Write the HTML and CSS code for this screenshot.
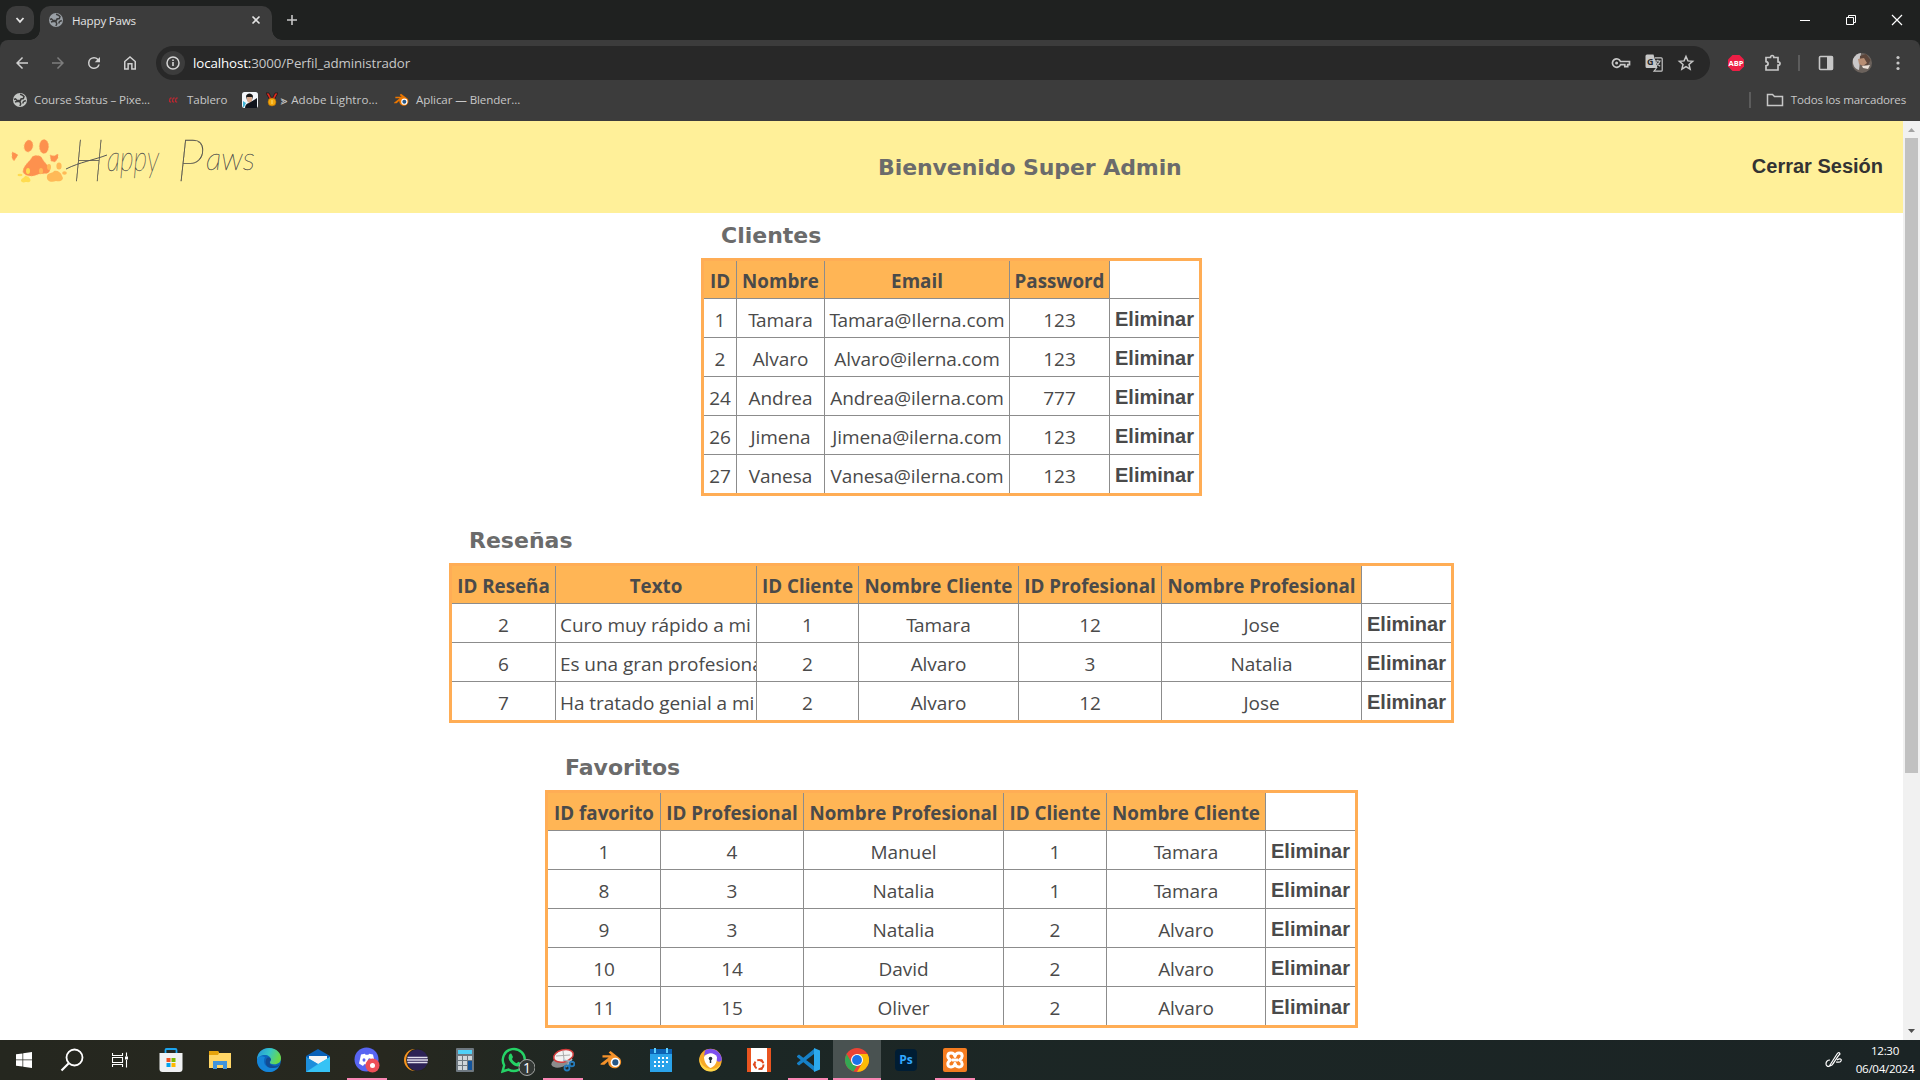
FILE: index.html
```html
<!DOCTYPE html>
<html lang="es">
<head>
<meta charset="utf-8">
<title>Happy Paws</title>
<link rel="stylesheet" href="styles.css">
</head>
<body>
<div class="desktop">
  <div class="tabstrip">
    <div class="tab-search"><svg width="10" height="10" viewBox="0 0 10 10"><path d="M1.5 3l3.5 3.8L8.500 3" fill="none" stroke="#e3e3e3" stroke-width="1.8"/></svg></div>
    <div class="tab">
      <svg width="16" height="16" viewBox="0 0 16 16"><circle cx="8" cy="8" r="7" fill="#9aa0a6"/><path d="M8 2.200c1.600.3 3 1 4 2.300l-.6 2-2.400.5-.5 1.500H5L3.500 6.800 2 7.500M3 10l2.500-.8 2.500.7.800 2.100-1 1.800M13.800 8.500l-2.300 1-.8 2" fill="none" stroke="#3c3c3c" stroke-width="1.500"/></svg>
      <span class="tab-title">Happy Paws</span>
      <svg class="tab-close" width="10" height="10" viewBox="0 0 10 10"><path d="M1.500 1.500l7 7M8.500 1.500l-7 7" stroke="#e3e3e3" stroke-width="1.600"/></svg>
    </div>
    <svg class="new-tab" width="12" height="12" viewBox="0 0 12 12"><path d="M6 1v10M1 6h10" stroke="#c7c7c7" stroke-width="1.600"/></svg>
    <div class="window-buttons">
      <svg width="12" height="12" viewBox="0 0 12 12"><path d="M1 6.500h10" stroke="#fff"/></svg>
      <svg width="12" height="12" viewBox="0 0 12 12"><path d="M1.500 3.500h7v7h-7zM3.500 3.500v-2h7v7h-2" fill="none" stroke="#fff"/></svg>
      <svg width="12" height="12" viewBox="0 0 12 12"><path d="M1 1l10 10M11 1L1 11" stroke="#fff" stroke-width="1.200"/></svg>
    </div>
  </div>

  <div class="toolbar">
    <div class="nav">
      <svg width="18" height="18" viewBox="0 0 24 24" fill="#d0d0d0"><path d="M20 11H7.800l5.600-5.600L12 4l-8 8 8 8 1.400-1.400L7.800 13H20z"/></svg>
      <svg width="18" height="18" viewBox="0 0 24 24" fill="#7d7d7d"><path d="M4 11h12.200l-5.600-5.600L12 4l8 8-8 8-1.400-1.400 5.600-5.600H4z"/></svg>
      <svg width="18" height="18" viewBox="0 0 24 24" fill="#d0d0d0"><path d="M17.650 6.350A7.950 7.950 0 0 0 12 4a8 8 0 1 0 7.730 10h-2.080A6 6 0 1 1 12 6c1.660 0 3.140.69 4.220 1.780L13 11h7V4z"/></svg>
      <svg width="18" height="18" viewBox="0 0 24 24"><path d="M5 20V10l7-6 7 6v10h-4.500v-7h-5v7z" fill="none" stroke="#d0d0d0" stroke-width="2"/></svg>
    </div>
    <div class="omnibox">
      <div class="info"><svg width="16" height="16" viewBox="0 0 16 16"><circle cx="8" cy="8" r="6" fill="none" stroke="#d6d6d6" stroke-width="1.500"/><path d="M8 7v4M8 4.500v1.600" stroke="#d6d6d6" stroke-width="1.600"/></svg></div>
      <span class="url"><b>localhost:</b>3000/Perfil_administrador</span>
      <div class="omni-icons">
        <svg width="20" height="12" viewBox="0 0 20 12"><path d="M9.500 4.500h9v3.200h-1.800v2h-2.900v-2H9.500a4.200 4.200 0 1 1 0-3.200z" fill="none" stroke="#c7c7c7" stroke-width="1.700"/><circle cx="5.600" cy="6" r="1.500" fill="#c7c7c7"/></svg>
        <svg width="18" height="18" viewBox="0 0 18 18"><path d="M2 .5h6.500L12.500 14H2a1.500 1.500 0 0 1-1.500-1.500V2A1.500 1.500 0 0 1 2 .5z" fill="#c7c7c7"/><path d="M10 3.800h6.200a1 1 0 0 1 1 1v11.400a1 1 0 0 1-1 1H9l2.500-3.200M9.800 7h6M12.800 5.800V7m2 0c-.4 2.300-2 4-4 5.300m.4-4c.8 1.600 2.300 3 4 3.900" fill="none" stroke="#c7c7c7" stroke-width="1.200"/><text x="2" y="10.500" font-size="9" font-weight="700" fill="#282828">G</text></svg>
        <svg width="18" height="18" viewBox="0 0 18 18"><path d="M9 2.500l1.900 4.400 4.700.4-3.600 3.100 1.100 4.700L9 12.600l-4.100 2.500L6 10.400 2.400 7.300l4.700-.4z" fill="none" stroke="#c7c7c7" stroke-width="1.500"/></svg>
      </div>
    </div>
    <div class="extensions">
      <svg width="18" height="18" viewBox="0 0 18 18"><path d="M5.500 1h7L17 5.500v7L12.500 17h-7L1 12.500v-7z" fill="#ed1e45"/><text x="9" y="11.800" font-size="7.500" font-weight="700" fill="#fff" text-anchor="middle">ABP</text></svg>
      <svg width="20" height="20" viewBox="0 0 20 20"><path d="M3 4.500h4.500c0-2.700 3.300-2.700 3.300 0H15v4.300c2.700 0 2.700 3.400 0 3.400v4.800H3v-4.200c2.800-.4 2.800-3.800 0-4.200z" fill="none" stroke="#c7c7c7" stroke-width="1.700"/></svg>
      <i class="bar"></i>
      <svg width="16" height="16" viewBox="0 0 16 16"><rect x="1.500" y="1.500" width="13" height="13" rx="1" fill="none" stroke="#c7c7c7" stroke-width="1.600"/><path d="M9 1.500h6v13H9z" fill="#c7c7c7"/></svg>
      <svg width="20" height="20" viewBox="0 0 20 20"><circle cx="10" cy="10" r="10" fill="#6b625c"/><path d="M1 6C3 2 6 .3 9 0L7 17C3 16 0 12 1 6z" fill="#c9c7c8"/><path d="M8 3l6-2 4.500 6-3 6-8-2z" fill="#5d463b"/><path d="M6 6l6-1 3 5-4 3-4-2z" fill="#b78d73"/><path d="M10 13l8-1-2 4-5-1z" fill="#eadfd6"/></svg>
      <svg width="6" height="16" viewBox="0 0 6 16" fill="#c7c7c7"><circle cx="3" cy="2.500" r="1.600"/><circle cx="3" cy="8" r="1.600"/><circle cx="3" cy="13.500" r="1.600"/></svg>
    </div>
  </div>

  <div class="bookmarks">
    <div class="bm bm-course"><svg width="16" height="16" viewBox="0 0 16 16"><circle cx="8" cy="8" r="7" fill="#c4c7c5"/><path d="M8 2.200c1.600.3 3 1 4 2.300l-.6 2-2.400.5-.5 1.500H5L3.500 6.800 2 7.500M3 10l2.500-.8 2.500.7.800 2.100-1 1.800M13.800 8.500l-2.300 1-.8 2" fill="none" stroke="#3c3c3c" stroke-width="1.500"/></svg><span>Course Status – Pixe...</span></div>
    <div class="bm bm-tablero"><svg width="9" height="6" viewBox="0 0 9 6"><path d="M2.700 1H1.200L.7 3v2h1.500M5.700 1H4.200L3.700 3v2h1.500M8.700 1H7.200L6.700 3v2h1.500" fill="none" stroke="#d8232f" stroke-width="1"/></svg><span>Tablero</span></div>
    <div class="bm bm-adobe"><svg width="16" height="16" viewBox="0 0 16 16"><rect width="16" height="16" rx="2.500" fill="#f2f6fa"/><path d="M4 4c1-3.500 6-3.500 7 0l-1 4H5z" fill="#161616"/><path d="M5 5h5v4l-2.500 2.500L5 9z" fill="#d6a98f"/><path d="M3 16c0-3 2-4.500 4-5l8-5v10z" fill="#10141c"/><path d="M1 9l3 2-2 4H1z" fill="#3fb4d8"/></svg>
      <svg class="medal" width="12" height="15" viewBox="0 0 12 15"><path d="M0 1h3l3 6 3-6h3L8 8H4z" fill="#d92a20" stroke="#111" stroke-width=".7"/><circle cx="6" cy="10" r="4" fill="#f2a60c" stroke="#a86505" stroke-width=".6"/><path d="M6 8v4" stroke="#ffe070"/></svg><span>⪢ Adobe Lightro...</span></div>
    <div class="bm bm-blender"><svg width="16" height="14" viewBox="0 0 24 21"><path d="M0 14.500L8.500 8H2V5.500h9.500L8.500 3l2-2 10 7.800a6.800 6.800 0 1 1-12.500 3L4 15.500H0z" fill="#ea7600"/><circle cx="15.500" cy="13" r="4.700" fill="#fff"/><circle cx="15.500" cy="13" r="3" fill="#265787"/></svg><span>Aplicar — Blender...</span></div>
    <div class="all-bm"><i class="bar"></i><svg width="18" height="14" viewBox="0 0 18 14"><path d="M1.500 1.500h5l2 2h8v9h-15z" fill="none" stroke="#c7c7c7" stroke-width="1.500"/></svg><span>Todos los marcadores</span></div>
  </div>

  <div class="viewport">
    <main class="page">
      <header class="site-header">
        <svg class="logo" width="270" height="92" viewBox="0 0 270 92">
          <g fill="#fd914e" stroke="#fdb06a" stroke-width=".7" stroke-dasharray="1.500 1.500"><ellipse cx="28.500" cy="25" rx="4.300" ry="6" transform="rotate(12 28.500 25)"/><ellipse cx="44" cy="25.500" rx="4.600" ry="7"/><path d="M12 31l3 1 3 2-2 3-2 3-2-3zM50 34l4 1 4-2v4l-3 4-4-1zM23 51c0-7 7-10 9-15 3-2 8-2 10 1 2 5 8 8 8 12-1 5-6 3-11 4-6 3-14 3-16-2z"/></g>
          <g fill="#ffb957"><path d="M47 55c1-4 5-2 7-5 3-1 7 1 8 5 3 4-2 6-6 5-5 2-10 0-9-5z"/><ellipse cx="59" cy="45" rx="2.600" ry="3.500"/><ellipse cx="49" cy="46" rx="2" ry="3"/><ellipse cx="64.500" cy="52" rx="2.300" ry="1.800"/><ellipse cx="41" cy="50" rx="2" ry="3"/></g>
          <g fill="#ffdc50"><path d="M21 59c1-2 3-2 4-4 3 0 5 2 5.500 4 0 3-3 2-5 2-2 1-5 0-4.500-2z"/><ellipse cx="28" cy="50" rx="2" ry="3"/><ellipse cx="20" cy="54" rx="2.500" ry="1.300"/></g>
          <g class="wordmark">
            <text x="73" y="60" font-size="58" textLength="31" lengthAdjust="spacingAndGlyphs">H</text>
            <text x="107" y="50" font-size="36" textLength="52" lengthAdjust="spacingAndGlyphs">appy</text>
            <text x="177" y="60" font-size="58" textLength="27" lengthAdjust="spacingAndGlyphs">P</text>
            <text x="206" y="49" font-size="32" textLength="49" lengthAdjust="spacingAndGlyphs">aws</text>
          </g>
          <path d="M66 48C80 41 94 39 107 34" fill="none" stroke="#555"/>
        </svg>
        <h1>Bienvenido Super Admin</h1>
        <button class="logout">Cerrar Sesión</button>
      </header>

      <section class="block clientes">
        <h2>Clientes</h2>
        <table>
          <colgroup><col class="w32"><col class="w88"><col class="w185"><col class="w100"><col class="w90"></colgroup>
          <tr><th>ID</th><th>Nombre</th><th>Email</th><th>Password</th><th class="empty"></th></tr>
          <tr><td>1</td><td><span class="kern">T</span>amara</td><td><span class="kern">T</span>amara@Ilerna.com</td><td>123</td><td><button>Eliminar</button></td></tr>
          <tr><td>2</td><td>Alvaro</td><td>Alvaro@ilerna.com</td><td>123</td><td><button>Eliminar</button></td></tr>
          <tr><td>24</td><td>Andrea</td><td>Andrea@ilerna.com</td><td>777</td><td><button>Eliminar</button></td></tr>
          <tr><td>26</td><td>Jimena</td><td>Jimena@ilerna.com</td><td>123</td><td><button>Eliminar</button></td></tr>
          <tr><td>27</td><td>Vanesa</td><td>Vanesa@ilerna.com</td><td>123</td><td><button>Eliminar</button></td></tr>
        </table>
      </section>

      <section class="block resenas">
        <h2>Reseñas</h2>
        <table>
          <colgroup><col class="w103"><col class="w201"><col class="w102"><col class="w160"><col class="w143"><col class="w200"><col class="w90"></colgroup>
          <tr><th>ID Reseña</th><th>Texto</th><th>ID Cliente</th><th>Nombre Cliente</th><th>ID Profesional</th><th>Nombre Profesional</th><th class="empty"></th></tr>
          <tr><td>2</td><td class="texto">Curo muy rápido a mi</td><td>1</td><td><span class="kern">T</span>amara</td><td>12</td><td>Jose</td><td><button>Eliminar</button></td></tr>
          <tr><td>6</td><td class="texto">Es una gran profesional</td><td>2</td><td>Alvaro</td><td>3</td><td>Natalia</td><td><button>Eliminar</button></td></tr>
          <tr><td>7</td><td class="texto">Ha tratado genial a mi</td><td>2</td><td>Alvaro</td><td>12</td><td>Jose</td><td><button>Eliminar</button></td></tr>
        </table>
      </section>

      <section class="block favoritos">
        <h2>Favoritos</h2>
        <table>
          <colgroup><col class="w112"><col class="w143"><col class="w200"><col class="w103"><col class="w159"><col class="w90"></colgroup>
          <tr><th>ID favorito</th><th>ID Profesional</th><th>Nombre Profesional</th><th>ID Cliente</th><th>Nombre Cliente</th><th class="empty"></th></tr>
          <tr><td>1</td><td>4</td><td>Manuel</td><td>1</td><td><span class="kern">T</span>amara</td><td><button>Eliminar</button></td></tr>
          <tr><td>8</td><td>3</td><td>Natalia</td><td>1</td><td><span class="kern">T</span>amara</td><td><button>Eliminar</button></td></tr>
          <tr><td>9</td><td>3</td><td>Natalia</td><td>2</td><td>Alvaro</td><td><button>Eliminar</button></td></tr>
          <tr><td>10</td><td>14</td><td>David</td><td>2</td><td>Alvaro</td><td><button>Eliminar</button></td></tr>
          <tr><td>11</td><td>15</td><td>Oliver</td><td>2</td><td>Alvaro</td><td><button>Eliminar</button></td></tr>
        </table>
      </section>
    </main>
    <div class="scrollbar">
      <svg width="17" height="17" viewBox="0 0 17 17"><path d="M5 11l3.500-4 3.500 4z" fill="#a3a3a3"/></svg>
      <div class="thumb"></div>
      <svg class="down" width="17" height="17" viewBox="0 0 17 17"><path d="M5 6l3.500 4L12 6z" fill="#505050"/></svg>
    </div>
  </div>

  <footer class="taskbar">
    <div class="app"><svg width="16" height="16" viewBox="0 0 16 16" fill="#fff"><path d="M0 2.300L6.500 1.400v6.200H0zM7.200 1.300L16 0v7.600H7.200zM0 8.300h6.500v6.300L0 13.700zM7.200 8.300H16V16l-8.800-1.300z"/></svg></div>
    <div class="app"><svg width="26" height="24" viewBox="0 0 26 24" fill="none" stroke="#fff"><circle cx="14.500" cy="9.500" r="8" stroke-width="1.800"/><path d="M8.500 15.500L1.500 22.500" stroke-width="2.200"/></svg></div>
    <div class="app"><svg class="nudge-left" width="16" height="16" viewBox="0 0 16 16" fill="none" stroke="#fff" stroke-width="1.100"><path d="M.5 1v2.500h10V1M.5 15v-2.500h10V15M.5 5.500h10v5H.5zM14.500 .5v4M14.500 8v7.500"/><path d="M13 4.500h3v3h-3z" fill="#fff" stroke="none"/></svg></div>
    <div class="app"><svg width="24" height="24" viewBox="0 0 24 24"><path d="M6.500 6V2q0-1 1-1h9q1 0 1 1v4" fill="none" stroke="#1ca4ee" stroke-width="1.800"/><path d="M.5 5h23v16q0 3-3 3h-17q-3 0-3-3z" fill="#f0f1f2"/><path d="M7.500 10h4v4h-4z" fill="#f25022"/><path d="M12.500 10h4v4h-4z" fill="#7fba00"/><path d="M7.500 15h4v4h-4z" fill="#00a4ef"/><path d="M12.500 15h4v4h-4z" fill="#ffb900"/></svg></div>
    <div class="app"><svg width="22" height="20" viewBox="0 0 22 20"><path d="M0 1h9l1 2h12v15H0z" fill="#ffd667"/><path d="M0 1h9l1 2-1 2H0z" fill="#e5a30c"/><path d="M4 19v-8h14v8h-4v-4H8v4z" fill="#4094dc"/></svg></div>
    <div class="app"><svg width="24" height="24" viewBox="0 0 24 24"><defs><linearGradient id="eg" x1="0" y1="0" x2="1" y2=".3"><stop offset="0" stop-color="#2390de"/><stop offset=".55" stop-color="#36c6c6"/><stop offset="1" stop-color="#68d84b"/></linearGradient></defs><circle cx="12" cy="12" r="12" fill="#0c66bd"/><path d="M0 12C0 4 6 0 12 0c8 0 12 6 12 10 0 5-4 7-9 6-3-.5-2-2-1-4 0-3-3-5-6-5-4 0-7 2-8 5z" fill="url(#eg)"/><path d="M8 9c-3 6 1 12 9 11 2 0 4-1 5-2-2 4-6 6-10 6C4 24 0 18 0 12c1-3 4-5 8-3z" fill="#1585d8"/><path d="M14 12c-3 2-1 6 4 6 2 0 4-1 5-2-1 3-4 4-8 4-6 0-8-6-5-10 2-1 4 0 4 2z" fill="#124c94"/></svg></div>
    <div class="app"><svg width="24" height="24" viewBox="0 0 24 24"><path d="M0 8L12 1l12 7v3H0z" fill="#0a61b8"/><path d="M3 8h18v9H3z" fill="#f5f5f5"/><path d="M0 9l12 7 12-7v15H0z" fill="#32b3ee"/><path d="M0 24l24-15v15z" fill="#36c3f5"/><path d="M0 9l12 7L0 24z" fill="#1d8edb"/></svg></div>
    <div class="app running"><svg width="26" height="26" viewBox="0 0 26 26"><circle cx="12.500" cy="12.500" r="12" fill="#5865f2"/><path d="M7 7.500l4-.8.500 1h3l.5-1 4 .8 2 9-4 2.500-1.200-1.800h-5.600L9 19l-4-2.500z" fill="#fff"/><ellipse cx="10" cy="13" rx="1.500" ry="1.700" fill="#5865f2"/><ellipse cx="15.500" cy="13" rx="1.500" ry="1.700" fill="#5865f2"/><circle cx="18.500" cy="18.500" r="7" fill="#ed4e57"/><circle cx="18.500" cy="18.500" r="2.500" fill="#fff"/></svg></div>
    <div class="app"><svg width="24" height="24" viewBox="0 0 24 24"><circle cx="11" cy="12" r="11" fill="#f7941e"/><circle cx="13.500" cy="12" r="11.300" fill="#24261f"/><circle cx="13.500" cy="12" r="10.500" fill="#2c2255"/><path d="M3.500 9.500h20M3 12h21M3.500 14.500h20" stroke="#e2dfee" stroke-width="1.300"/></svg></div>
    <div class="app"><svg width="18" height="24" viewBox="0 0 18 24"><rect width="18" height="24" rx="1" fill="#6e7880"/><path d="M2 2h14v4H2z" fill="#4fd0f7"/><path d="M2 8h4v4H2zm5 0h4v4H7zm5 0h4v4h-4zM2 13h4v4H2zm5 0h4v4H7zM2 18h4v4H2zm5 0h4v4H7z" fill="#d0d6da"/><path d="M12 13h4v9h-4z" fill="#12549c"/></svg></div>
    <div class="app"><svg class="whatsapp" width="34" height="30" viewBox="0 0 34 30"><path d="M1.500 25.500l1.700-6.200a11 11 0 1 1 4.300 4.300z" fill="none" stroke="#25d366" stroke-width="2.400"/><path d="M8 9c1-2 2.500-2 3 0l1 2-1 2c1 2 2.500 3.500 4.500 4.300l2-1.500 3 1.700c-.5 3-4 3.500-6 2.500-3-1-6.500-5-7-8z" fill="#25d366"/><circle cx="26" cy="21.500" r="8" fill="#333835" stroke="#a3a6a4"/><text x="26" y="26.500" font-size="14" fill="#fff" text-anchor="middle">1</text></svg></div>
    <div class="app running"><svg width="24" height="24" viewBox="0 0 24 24"><ellipse cx="10" cy="14" rx="10" ry="5" fill="#8c8c8c" transform="rotate(-18 10 14)"/><ellipse cx="12.500" cy="8" rx="10" ry="6" fill="#f4f4f4" stroke="#d23b3b" stroke-width="1.500" transform="rotate(-15 12 8)"/><path d="M5 8l14-1M12 3l1 8" stroke="#aaa"/><path d="M12 12l10 2M21 11l-6 8" stroke="#9fb4c4" stroke-width="1.500"/><g fill="none" stroke="#247bbd" stroke-width="1.800"><circle cx="16" cy="20" r="2.500"/><circle cx="21" cy="16" r="2.300"/></g></svg></div>
    <div class="app"><svg width="24" height="20" viewBox="0 0 24 21"><path d="M0 14.500L8.500 8H2V5.500h9.500L8.500 2.500 10.500 1l10 7.800a6.800 6.800 0 1 1-12.500 3L4 15.500H0z" fill="#f5922a"/><circle cx="15.500" cy="13" r="4.900" fill="#fff"/><circle cx="15.500" cy="13" r="3.200" fill="#265787"/></svg></div>
    <div class="app"><svg width="22" height="24" viewBox="0 0 22 24"><path d="M0 2h22v22H0z" fill="#2aa3ea"/><path d="M0 1h22v5H0z" fill="#0c62b4"/><path d="M4 0h2v5H4zM16 0h2v5h-2z" fill="#5fd2ff"/><path d="M8 10h10M4 14h14M4 18h10" stroke="#fff" stroke-width="2" stroke-dasharray="2 2"/></svg></div>
    <div class="app"><svg width="23" height="24" viewBox="0 0 23 24"><circle cx="11.500" cy="12" r="11.300" fill="#f7a928"/><path d="M6 2.500C14-2 23 4 22.800 12c-2 3-5 2-6-1C16 6 10 4 5 8z" fill="#7c4ff0"/><path d="M.5 9C1 16 5 20 12 21c4 0 8-2 10-5-2 5-6 7.500-10.500 7.500C4 23.500-.5 16 .5 9z" fill="#ffd748"/><path d="M5 9c4-5 10-5 13 0 0 6-2 9-6.500 11C8 18 5 14 5 9z" fill="#fff"/><circle cx="11.500" cy="10.500" r="1.800" fill="#24303c"/><path d="M11.500 10v5" stroke="#24303c" stroke-width="1.500"/></svg></div>
    <div class="app"><svg width="24" height="24" viewBox="0 0 24 24"><path d="M0 0h24v24H0z" fill="#e95420"/><path d="M4 0h16v24H4z" fill="#fff"/><circle cx="12" cy="16.500" r="4.500" fill="none" stroke="#e04a1f" stroke-width="2" stroke-dasharray="7.400 2"/><g fill="#e04a1f"><circle cx="7.200" cy="16.500" r="1.300"/><circle cx="14.500" cy="12.500" r="1.300"/><circle cx="14.500" cy="20.700" r="1.300"/></g></svg></div>
    <div class="app running"><svg width="24" height="24" viewBox="0 0 24 24"><path d="M1 8l2-1.500L18 18v5L1 9zM18 1v5L3 17.500 1 16v-1z" fill="#1680c7"/><path d="M18 0l6 2.500v19L18 24z" fill="#2ba9ee"/></svg></div>
    <div class="app active running"><svg width="24" height="24" viewBox="0 0 24 24"><circle cx="12" cy="12" r="12" fill="#ea4335"/><path d="M1.600 6L6.800 15l5.200 3-3.500 5.500A12 12 0 0 1 1.600 6z" fill="#34a853"/><path d="M12 6h10.400A12 12 0 0 1 12 24l5.200-9z" fill="#fbbc05"/><circle cx="12" cy="12" r="6" fill="#fff"/><circle cx="12" cy="12" r="4.900" fill="#1a73e8"/></svg></div>
    <div class="app"><svg width="22" height="22" viewBox="0 0 22 22"><rect width="22" height="22" rx="4" fill="#001d34"/><text x="11" y="15" font-size="12" font-weight="700" fill="#31a8ff" text-anchor="middle">Ps</text></svg></div>
    <div class="app running"><svg width="24" height="24" viewBox="0 0 24 24"><rect width="24" height="24" rx="2" fill="#f47c20"/><path d="M12 8.500C11 4 5 4 4.800 8c0 2 1.200 3 2.700 4C6 13 4.800 14 4.800 16c.2 4 6.200 4 7.200-.5 1 4.500 7 4.500 7.200.5 0-2-1.200-3-2.700-4 1.500-1 2.700-2 2.700-4-.2-4-6.200-4-7.200.5z" fill="none" stroke="#fff" stroke-width="3" stroke-linejoin="round"/><path d="M9 12h6" stroke="#fff" stroke-width="3"/></svg></div>
    <svg class="pen" width="18" height="18" viewBox="0 0 18 18" fill="none" stroke="#fff" stroke-width="1.200"><path d="M5 14L12 3q1.500-2 2.500-1T14 4L7 14l-2.500 1zM8 13l5-8M5 9c-3 0-4 2-4 4s2 3 4 2M12 9c3-2 5-1 4 1s-4 1-5 1"/></svg>
    <div class="clock"><span>12:30</span><span>06/04/2024</span></div>
  </footer>
</div>
</body>
</html>
```
FILE: styles.css
```css
* { box-sizing: border-box; }
body { margin: 0; overflow: hidden; font-family: "Open Sans", sans-serif; }
svg { display: block; flex: none; }
.desktop { width: 1920px; height: 1080px; display: flex; flex-direction: column; background: #1f2120; }

/* browser chrome */
.tabstrip { height: 40px; display: flex; padding: 6px 0 0 6px; flex: none; }
.tab-search { width: 28px; height: 28px; border-radius: 10px; background: #3c3c3c; display: flex; align-items: center; justify-content: center; }
.tab { position: relative; width: 232px; height: 34px; margin-left: 6px; padding: 0 11px 6px 8px; display: flex; align-items: center; border-radius: 10px 10px 0 0; background: #3c3c3c; font-size: 11.6px; color: #e3e3e3; }
.tab::before, .tab::after { content: ""; position: absolute; bottom: 0; width: 10px; height: 10px; }
.tab::before { left: -10px; background: radial-gradient(circle at 0 0, transparent 9.500px, #3c3c3c 10px); }
.tab::after { right: -10px; background: radial-gradient(circle at 100% 0, transparent 9.500px, #3c3c3c 10px); }
.tab-title { margin: 1px 0 0 8px; letter-spacing: -.2px; }
.tab-close { margin-left: auto; }
.new-tab { margin: 8px 0 0 14px; }
.window-buttons { margin-left: auto; display: flex; gap: 34px; padding: 8px 17px 0 0; }
.toolbar { height: 46px; flex: none; background: #3c3c3c; border-radius: 8px 8px 0 0; display: flex; align-items: center; }
.nav { width: 156px; padding-left: 13px; display: flex; gap: 18px; }
.omnibox { width: 1554px; height: 34px; border-radius: 17px; background: #282828; display: flex; align-items: center; padding: 0 15px 0 5px; }
.info { width: 24px; height: 24px; border-radius: 50%; background: #3c3c3c; display: flex; align-items: center; justify-content: center; }
.url { margin-left: 8px; font-size: 13.300px; letter-spacing: -.1px; color: #c7c7c7; }
.url b { font-weight: 400; color: #fff; }
.omni-icons { margin-left: auto; display: flex; align-items: center; gap: 14px; }
.extensions { flex: 1; display: flex; align-items: center; padding-left: 17px; }
.extensions svg:nth-of-type(2) { margin-left: 18px; }
.bar { width: 2px; height: 16px; background: #5c5c5c; flex: none; }
.extensions .bar { margin: 0 18px 0 15px; }
.extensions svg:nth-of-type(4) { margin: 0 23px 0 18px; }
.bookmarks { height: 35px; flex: none; background: #3c3c3c; display: flex; align-items: center; padding: 0 14px 8px 12px; font-size: 11.600px; color: #c7c7c7; }
.bm { display: flex; align-items: center; white-space: nowrap; letter-spacing: -.1px; }
.bm-course { width: 157px; gap: 6px; }
.bm-tablero { width: 73px; gap: 9px; }
.bm-adobe { width: 152px; letter-spacing: .08px; }
.medal { margin: 0 3px 0 8px; }
.bm-blender { gap: 6px; }
.all-bm { margin-left: auto; display: flex; align-items: center; letter-spacing: -.2px; }
.all-bm svg { margin: 0 7px 0 15px; }

/* page */
.viewport { height: 919px; flex: none; display: flex; overflow: hidden; }
.page { width: 1903px; background: #fff; display: flex; flex-direction: column; align-items: center; }
.site-header { width: 100%; height: 92px; flex: none; background: #fff099; display: flex; align-items: center; padding-right: 20px; }
.wordmark { font-family: Lato, sans-serif; font-weight: 100; font-style: italic; fill: #4a4a4a; stroke: #4a4a4a; stroke-width: .3px; }
.site-header h1 { margin: 2px 0 0 608px; font: 700 22px/26px "DejaVu Sans", sans-serif; letter-spacing: -.08px; color: #6b6b6b; white-space: nowrap; }
.logout { margin-left: auto; margin-bottom: 2px; padding: 0; border: 0; background: none; font: 700 20px/24px "Liberation Sans", sans-serif; color: #333; }
.block { flex: none; margin-bottom: 22px; }
.block h2 { height: 45px; margin: 0; padding: 10px 0 0 20px; font: 700 22px/26px "DejaVu Sans", sans-serif; color: #6b6b6b; }
table { table-layout: fixed; border: 3px solid #ffad55; border-spacing: 0; color: #4a4a4a; font-size: 19px; line-height: 28px; text-align: center; white-space: nowrap; }
.clientes table { width: 501px; }
.resenas table { width: 1005px; }
.favoritos table { width: 813px; }
.w32 { width: 32px; } .w88 { width: 88px; } .w90 { width: 90px; } .w100 { width: 100px; }
.w102 { width: 102px; } .w103 { width: 103px; } .w112 { width: 112px; } .w143 { width: 143px; }
.w159 { width: 159px; } .w160 { width: 160px; } .w185 { width: 185px; } .w200 { width: 200px; } .w201 { width: 201px; }
th, td { padding: 3px 0 0; border-left: 1px solid #8c8c8c; }
th { height: 37px; background: #ffb555; font-size: 18.800px; }
td { height: 39px; border-top: 1px solid #8c8c8c; letter-spacing: -.06px; }
th:first-child, td:first-child { border-left: 0; }
th.empty { background: #fff; }
.kern { letter-spacing: -2.600px; }
.texto { padding-left: 4px; text-align: left; overflow: hidden; }
td button { display: block; margin: -2px auto 0; padding: 0; border: 0; background: none; font: 700 20px/24px "Liberation Sans", sans-serif; color: #4a4a4a; }
.scrollbar { width: 17px; background: #f1f1f1; display: flex; flex-direction: column; align-items: center; }
.thumb { width: 13px; height: 635px; background: #c1c1c1; }
.down { margin-top: auto; }

/* taskbar */
.taskbar { height: 40px; flex: none; display: flex; background: linear-gradient(90deg, #25271f 0, #27281f 20%, #1c2725 35%, #1b2425 100%); color: #fff; }
.app { width: 48px; margin-right: 1px; display: flex; align-items: center; justify-content: center; background: linear-gradient(#f986b4, #f986b4) bottom / 0 2px no-repeat; }
.app.running { background-size: 40px 2px; }
.app.active { background-color: #495251; background-size: 48px 2px; }
.nudge-left { margin-right: 4px; }
.whatsapp { margin: 2px 0 0 7px; }
.pen { margin: 11px 0 0 auto; }
.clock { width: 70px; margin-left: 7px; display: flex; flex-direction: column; align-items: center; font-size: 11.600px; line-height: 18px; padding-top: 2px; letter-spacing: -.3px; }
```
